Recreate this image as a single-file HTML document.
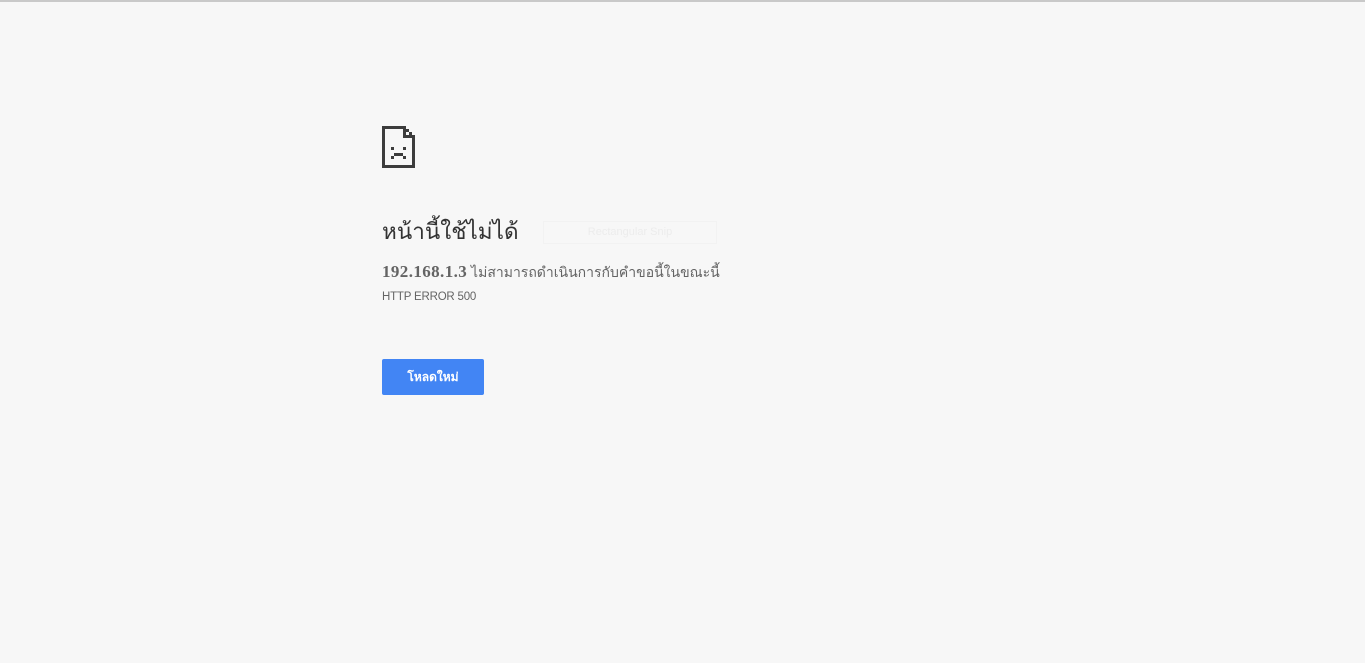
<!DOCTYPE html>
<html><head><meta charset="utf-8"><style>
body{margin:0;background:#f7f7f7;width:1365px;height:663px;overflow:hidden;position:relative;font-family:"Liberation Sans","Noto Sans CJK SC",sans-serif;color:#646464}
.top{position:absolute;left:0;top:0;width:1365px;height:2px;background:#c9c9c9}
.h1{position:absolute;left:382px;top:213px;font-size:22.5px;color:#333}
.snip{position:absolute;left:543px;top:221px;width:172px;height:21px;border:1px solid #f2f2f2;color:#ececec;font-size:11px;text-align:center;line-height:21px}
.l1{position:absolute;left:382px;top:262px;font-size:14px;color:#646464;white-space:nowrap}
.l1 b{font-family:"Liberation Serif",serif;font-size:17px;letter-spacing:0.4px}
.l2{position:absolute;left:382px;top:291px;font-size:11.5px;color:#646464;letter-spacing:-0.2px}
.btn{position:absolute;left:382px;top:359px;width:102px;height:36px;background:#4285f4;border-radius:2px;color:#fff;font-size:12px;font-weight:bold;text-align:center;line-height:36px}
</style></head><body>
<div class="top"></div>
<svg style="position:absolute;left:382px;top:126px" width="34" height="42" viewBox="0 0 34 42">
<g fill="#3c3c3c">
<rect x="0" y="0" width="24" height="3"/>
<rect x="0" y="0" width="3" height="42"/>
<rect x="0" y="39" width="33" height="3"/>
<rect x="30" y="12" width="3" height="30"/>
<rect x="21" y="0" width="3" height="12"/>
<rect x="21" y="9" width="12" height="3"/>
<rect x="24" y="3" width="3" height="3"/>
<rect x="27" y="6" width="3" height="3"/>
<rect x="9" y="21" width="3" height="3"/>
<rect x="21" y="21" width="3" height="3"/>
<rect x="12" y="27" width="9" height="3"/>
<rect x="9" y="30" width="3" height="3"/>
<rect x="21" y="30" width="3" height="3"/>
</g></svg>
<div class="h1">หน้านี้ใช้ไม่ได้</div>
<div class="snip">Rectangular Snip</div>
<div class="l1"><b>192.168.1.3</b> ไม่สามารถดำเนินการกับคำขอนี้ในขณะนี้</div>
<div class="l2">HTTP ERROR 500</div>
<div class="btn">โหลดใหม่</div>
</body></html>
